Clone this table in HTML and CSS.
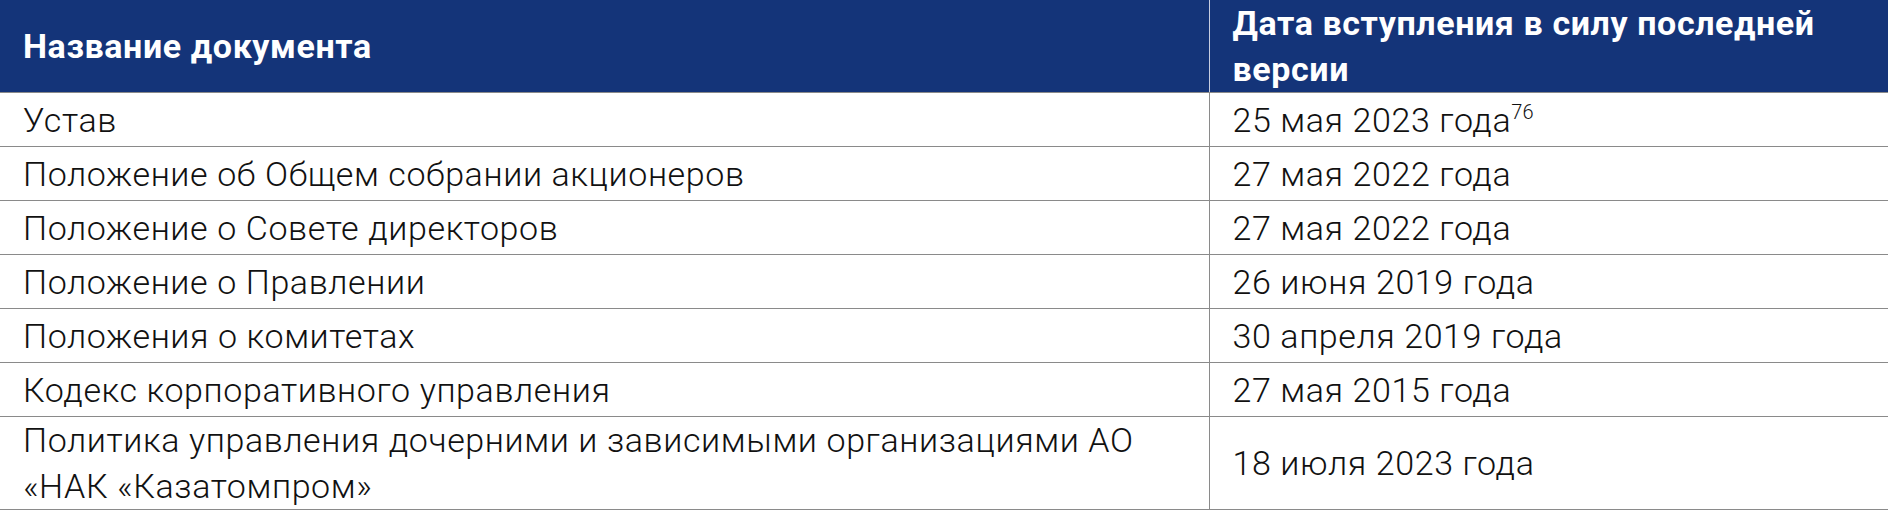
FILE: index.html
```html
<!DOCTYPE html>
<html lang="ru">
<head>
<meta charset="utf-8">
<title>Документы</title>
<link rel="stylesheet" href="styles.css">
</head>
<body>
<table class="docs">
  <colgroup>
    <col class="col-name">
    <col class="col-date">
  </colgroup>
  <thead>
    <tr>
      <th>Название документа</th>
      <th>Дата вступления в силу последней версии</th>
    </tr>
  </thead>
  <tbody>
    <tr><td>Устав</td><td>25 мая 2023 года<sup>76</sup></td></tr>
    <tr><td>Положение об Общем собрании акционеров</td><td>27 мая 2022 года</td></tr>
    <tr><td>Положение о Совете директоров</td><td>27 мая 2022 года</td></tr>
    <tr><td>Положение о Правлении</td><td>26 июня 2019 года</td></tr>
    <tr><td>Положения о комитетах</td><td>30 апреля 2019 года</td></tr>
    <tr><td>Кодекс корпоративного управления</td><td>27 мая 2015 года</td></tr>
    <tr><td>Политика управления дочерними и зависимыми организациями АО «НАК «Казатомпром»</td><td>18 июля 2023 года</td></tr>
  </tbody>
</table>
</body>
</html>
```
FILE: styles.css
```css
html, body {
  margin: 0;
  padding: 0;
  background: #ffffff;
}

.docs {
  width: 1888px;
  table-layout: fixed;
  border-collapse: collapse;
  font-family: Roboto, "Liberation Sans", sans-serif;
  font-size: 34px;
  line-height: 46px;
  letter-spacing: 0.6px;
  color: #111111;
}

.col-name { width: 1209px; }
.col-date { width: 679px; }

.docs th {
  background: #143479;
  color: #ffffff;
  font-weight: 700;
  text-align: left;
  vertical-align: middle;
  height: 91px;
  padding: 0 22px 0 23px;
  border-bottom: 1px solid #8a8a8a;
}

.docs th + th {
  border-left: 1px solid #c8cde0;
}

.docs td {
  font-weight: 300;
  vertical-align: middle;
  height: 53px;
  padding: 0 22px 0 23px;
  border-bottom: 1px solid #8a8a8a;
}

.docs td + td {
  border-left: 1px solid #8a8a8a;
}

.docs sup {
  font-size: 20px;
  line-height: 0;
  letter-spacing: 0;
  vertical-align: 13px;
}
```
